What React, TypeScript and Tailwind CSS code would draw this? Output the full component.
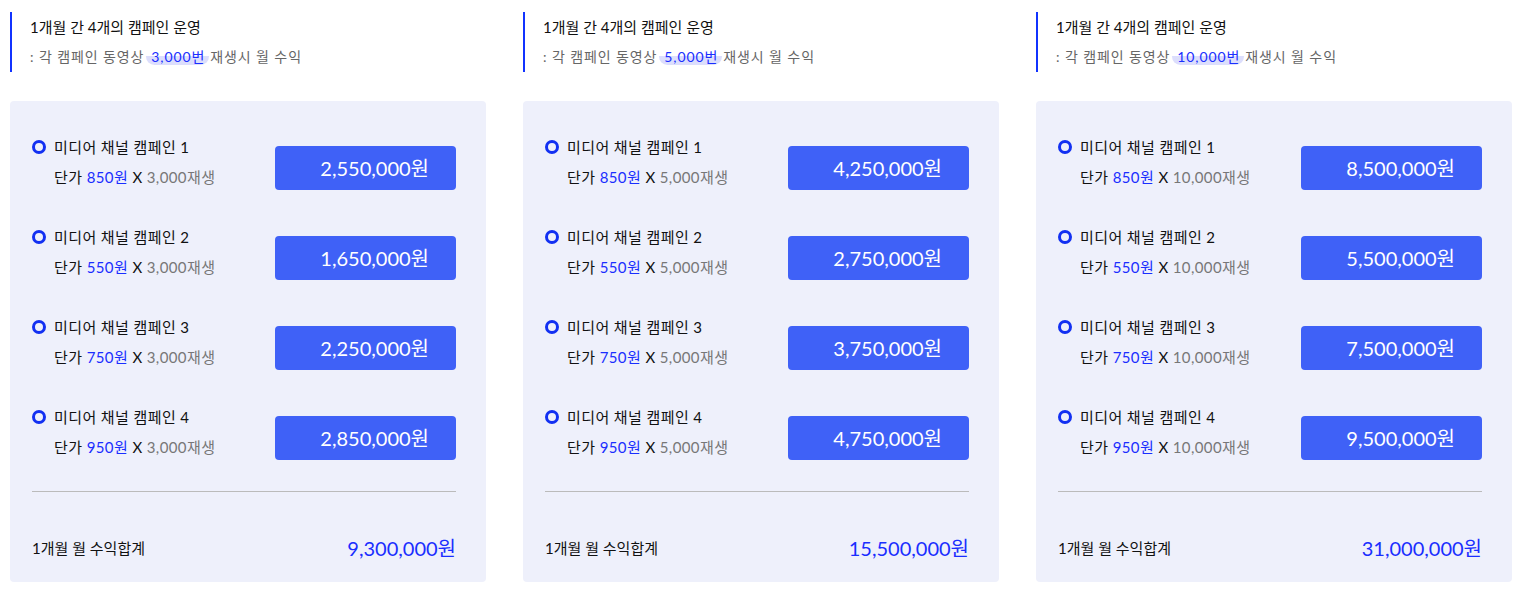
import React from "react";

const cols = [
  {
    plays: "3,000",
    items: [
      { price: "850원", total: "2,550,000원" },
      { price: "550원", total: "1,650,000원" },
      { price: "750원", total: "2,250,000원" },
      { price: "950원", total: "2,850,000원" },
    ],
    sum: "9,300,000원",
  },
  {
    plays: "5,000",
    items: [
      { price: "850원", total: "4,250,000원" },
      { price: "550원", total: "2,750,000원" },
      { price: "750원", total: "3,750,000원" },
      { price: "950원", total: "4,750,000원" },
    ],
    sum: "15,500,000원",
  },
  {
    plays: "10,000",
    items: [
      { price: "850원", total: "8,500,000원" },
      { price: "550원", total: "5,500,000원" },
      { price: "750원", total: "7,500,000원" },
      { price: "950원", total: "9,500,000원" },
    ],
    sum: "31,000,000원",
  },
];

export default function App() {
  return (
    <div
      className="flex gap-[37px] pl-[10px] pt-[12px] bg-white w-[1526px] h-[595px]"
      style={{ fontFamily: 'Lato, "Noto Sans CJK KR", sans-serif' }}
    >
      {cols.map((c, ci) => (
        <div key={ci} className="w-[476px] flex flex-col">
          <div className="border-l-2 border-[#1133ff] pl-[18px] h-[60px]">
            <div className="text-[15px] leading-[30px] text-[#111]">1개월 간 4개의 캠페인 운영</div>
            <div className="text-[14px] leading-[30px] text-[#666] tracking-[0.9px]">
              : 각 캠페인 동영상
              <span className="ml-[2px] text-[#1a2eff] pl-[5px] pr-[4px] rounded-full bg-[linear-gradient(transparent_45%,#dcdefc_45%)]">
                {c.plays}번
              </span>
              <span className="ml-[1px]">재생시 월 수익</span>
            </div>
          </div>
          <div className="mt-[29px] bg-[#eef0fb] rounded-[4px] pl-[22px] pr-[30px] pt-[31px] pb-[19px]">
            <div className="flex flex-col gap-[30px]">
              {c.items.map((it, i) => (
                <div key={i} className="flex justify-between items-start">
                  <div className="tracking-[0.4px]">
                    <div className="flex items-center h-[30px] text-[15px] text-[#111]">
                      <span className="w-[14px] h-[14px] rounded-full border-[3px] border-[#1230f2] mr-[8px]" />
                      미디어 채널 캠페인 {i + 1}
                    </div>
                    <div className="pl-[22px] h-[30px] leading-[30px] text-[15px] text-[#111]">
                      단가 <span className="text-[#1a2eff]">{it.price}</span> X{" "}
                      <span className="text-[#777]">{c.plays}재생</span>
                    </div>
                  </div>
                  <div className="mt-[14px] w-[181px] h-[44px] rounded-[4px] bg-[#3f61f7] text-white text-[20px] leading-[44px] text-right pr-[27px]">
                    {it.total}
                  </div>
                </div>
              ))}
            </div>
            <div className="mt-[29px] h-px bg-[#bbbbbb]" />
            <div className="mt-[41px] flex justify-between items-center h-[30px]">
              <span className="text-[15px] text-[#111]">1개월 월 수익합계</span>
              <span className="text-[20px] text-[#1a2eff]">{c.sum}</span>
            </div>
          </div>
        </div>
      ))}
    </div>
  );
}
